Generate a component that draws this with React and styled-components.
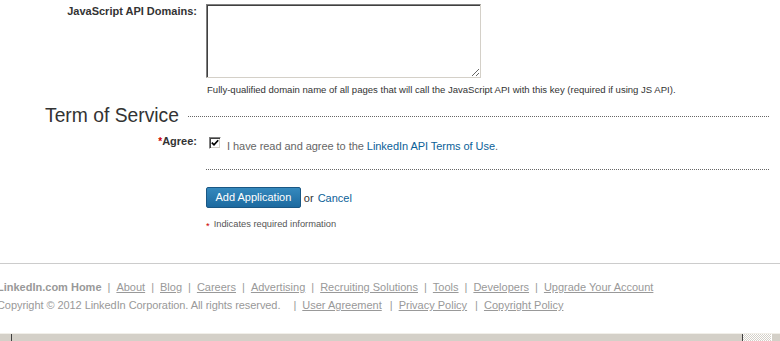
import styled, { createGlobalStyle } from 'styled-components';

const GlobalStyle = createGlobalStyle`
	html, body {
		margin: 0;
		padding: 0;
		background: #fff;
	}
	body {
		font-family: "Liberation Sans", Arial, sans-serif;
		overflow: hidden;
	}
`;

export default function App() {
	return (
		<>
			<GlobalStyle />
			<Page>
				<Row $top={4}>
					<Label>JavaScript API Domains:</Label>
					<Field>
						<Domains />
						<Help>
							Fully-qualified domain name of all pages that will call the JavaScript API with this key
							(required if using JS API).
						</Help>
					</Field>
				</Row>

				<SectionHead>
					<SectionTitle>Term of Service</SectionTitle>
					<DottedRule />
				</SectionHead>

				<Row $top={6}>
					<Label>
						<Req>*</Req>Agree:
					</Label>
					<Field>
						<CheckLine>
							<CheckBox>
								<svg width="8" height="8" viewBox="0 0 8 8">
									<path d="M0.8 3.6 L3 5.8 L7.2 1.2" fill="none" stroke="#000" strokeWidth="1.7" />
								</svg>
							</CheckBox>
							<CheckText>
								I have read and agree to the <Link href="#">LinkedIn API Terms of Use</Link>.
							</CheckText>
						</CheckLine>
						<DottedRule $top={16} />
					</Field>
				</Row>

				<Row $top={17}>
					<span />
					<Field>
						<Actions>
							<PrimaryButton type="button">Add Application</PrimaryButton>
							<Or>or</Or>
							<Link href="#">Cancel</Link>
						</Actions>
						<Note>
							<NoteStar>*</NoteStar>Indicates required information
						</Note>
					</Field>
				</Row>

				<Footer>
					<FootLine>
						<HomeLink>LinkedIn.com Home</HomeLink>
						<Sep>|</Sep>
						<FootLink href="#">About</FootLink>
						<Sep>|</Sep>
						<FootLink href="#">Blog</FootLink>
						<Sep>|</Sep>
						<FootLink href="#">Careers</FootLink>
						<Sep>|</Sep>
						<FootLink href="#">Advertising</FootLink>
						<Sep>|</Sep>
						<FootLink href="#">Recruiting Solutions</FootLink>
						<Sep>|</Sep>
						<FootLink href="#">Tools</FootLink>
						<Sep>|</Sep>
						<FootLink href="#">Developers</FootLink>
						<Sep>|</Sep>
						<FootLink href="#">Upgrade Your Account</FootLink>
					</FootLine>
					<FootLine>
						<Copy>Copyright © 2012 LinkedIn Corporation. All rights reserved.</Copy>
						<Sep $left={13}>|</Sep>
						<FootLink href="#">User Agreement</FootLink>
						<Sep $left={8}>|</Sep>
						<FootLink href="#">Privacy Policy</FootLink>
						<Sep $left={8}>|</Sep>
						<FootLink href="#">Copyright Policy</FootLink>
					</FootLine>
				</Footer>

				<ScrollBar>
					<ArrowButton>
						<ArrowLeft />
					</ArrowButton>
					<Thumb />
					<Track />
					<ArrowButton $right>
						<ArrowRight />
					</ArrowButton>
				</ScrollBar>
			</Page>
		</>
	);
}

const Page = styled.div`
	width: 780px;
	height: 341px;
	overflow: hidden;
	display: flex;
	flex-direction: column;
`;

const Row = styled.div`
	display: grid;
	grid-template-columns: 197px 1fr;
	column-gap: 9px;
	padding-right: 11px;
	margin-top: ${({ $top }) => $top || 0}px;
`;

const Label = styled.label`
	text-align: right;
	font-size: 11px;
	line-height: 14px;
	font-weight: bold;
	color: #333;
`;

const Req = styled.span`
	color: #c00;
	font-size: 10px;
	font-weight: bold;
`;

const Field = styled.div`
	display: flex;
	flex-direction: column;
	align-items: stretch;
`;

const Domains = styled.textarea`
	display: block;
	box-sizing: border-box;
	width: 275px;
	height: 74px;
	margin: 0;
	padding: 2px;
	border-style: solid;
	border-width: 1px;
	border-color: #808080 #d4d0c8 #d4d0c8 #808080;
	box-shadow: inset 1px 1px 0 #404040;
	background: #fff;
	resize: both;
	font-family: "Liberation Sans", Arial, sans-serif;
	font-size: 11px;
`;

const Help = styled.p`
	margin: 6px 0 0 1px;
	font-size: 9.55px;
	line-height: 12px;
	color: #333;
	white-space: nowrap;
`;

const SectionHead = styled.div`
	display: flex;
	align-items: center;
	gap: 9px;
	margin-top: 8px;
	padding: 0 11px 0 45px;
	height: 24px;
`;

const SectionTitle = styled.h2`
	margin: 0;
	font-size: 19.3px;
	line-height: 24px;
	font-weight: normal;
	color: #333;
	white-space: nowrap;
`;

const DottedRule = styled.div`
	flex: 1;
	border-top: 1px dotted #666;
	margin-top: ${({ $top }) => $top || 0}px;
`;

const CheckLine = styled.div`
	display: flex;
	align-items: flex-start;
`;

const CheckBox = styled.span`
	box-sizing: border-box;
	width: 12px;
	height: 12px;
	margin: 3px 6px 0 3px;
	display: flex;
	align-items: center;
	justify-content: center;
	border-style: solid;
	border-width: 1px;
	border-color: #808080 #fff #fff #808080;
	box-shadow: inset 1px 1px 0 #404040, inset -1px -1px 0 #d4d0c8;
	background: #fff;
`;

const CheckText = styled.span`
	margin-top: 5px;
	font-size: 11px;
	line-height: 14px;
	letter-spacing: -0.05px;
	color: #666;
`;

const Link = styled.a`
	color: #0b6198;
	text-decoration: none;
`;

const Actions = styled.div`
	display: flex;
	align-items: center;
	font-size: 11px;
`;

const PrimaryButton = styled.button`
	box-sizing: border-box;
	height: 21px;
	margin: 0;
	padding: 0 8.5px;
	border: 1px solid #1a5784;
	border-radius: 2px;
	background: linear-gradient(#3589bd, #1d6aa0);
	color: #fff;
	font-family: "Liberation Sans", Arial, sans-serif;
	font-size: 11px;
	line-height: 19px;
	cursor: pointer;
`;

const Or = styled.span`
	margin: 0 4px 0 3px;
	color: #333;
`;

const Note = styled.p`
	margin: 10px 0 0;
	font-size: 9.3px;
	line-height: 12px;
	color: #555;
`;

const NoteStar = styled.span`
	color: #c00;
	margin-right: 4px;
	line-height: 0;
	vertical-align: -2px;
`;

const Footer = styled.div`
	margin-top: 33px;
	border-top: 1px solid #ccc;
	padding-top: 14px;
	margin-left: -3px;
	font-size: 11px;
	line-height: 18px;
	color: #999;
`;

const FootLine = styled.div`
	display: flex;
	white-space: nowrap;
`;

const HomeLink = styled.span`
	font-weight: bold;
	color: #999;
`;

const Copy = styled.span`
	letter-spacing: -0.07px;
`;

const FootLink = styled.a`
	color: #999;
	text-decoration: underline;
`;

const Sep = styled.span`
	margin: 0 6px 0 ${({ $left }) => $left || 6}px;
	color: #999;
`;

const ScrollBar = styled.div`
	margin-top: 19px;
	flex: none;
	height: 16px;
	display: flex;
	border-top: 1px solid #f1efe9;
	background: #d4d0c8;
`;

const ArrowButton = styled.div`
	width: ${({ $right }) => ($right ? 8 : 11)}px;
	border-left: ${({ $right }) => ($right ? '1px solid #fff' : 'none')};
	border-right: ${({ $right }) => ($right ? 'none' : '1px solid #404040')};
	display: flex;
	align-items: center;
	justify-content: center;
	padding-top: 6px;
`;

const ArrowLeft = styled.span`
	width: 0;
	height: 0;
	border-top: 4px solid transparent;
	border-bottom: 4px solid transparent;
	border-right: 4px solid #000;
`;

const ArrowRight = styled.span`
	width: 0;
	height: 0;
	border-top: 4px solid transparent;
	border-bottom: 4px solid transparent;
	border-left: 4px solid #000;
`;

const Thumb = styled.div`
	flex: 1;
	border-right: 1px solid #404040;
`;

const Track = styled.div`
	width: 28px;
	background-color: #fff;
	background-image: repeating-conic-gradient(#d4d0c8 0 25%, #fff 0 50%);
	background-size: 2px 2px;
`;
